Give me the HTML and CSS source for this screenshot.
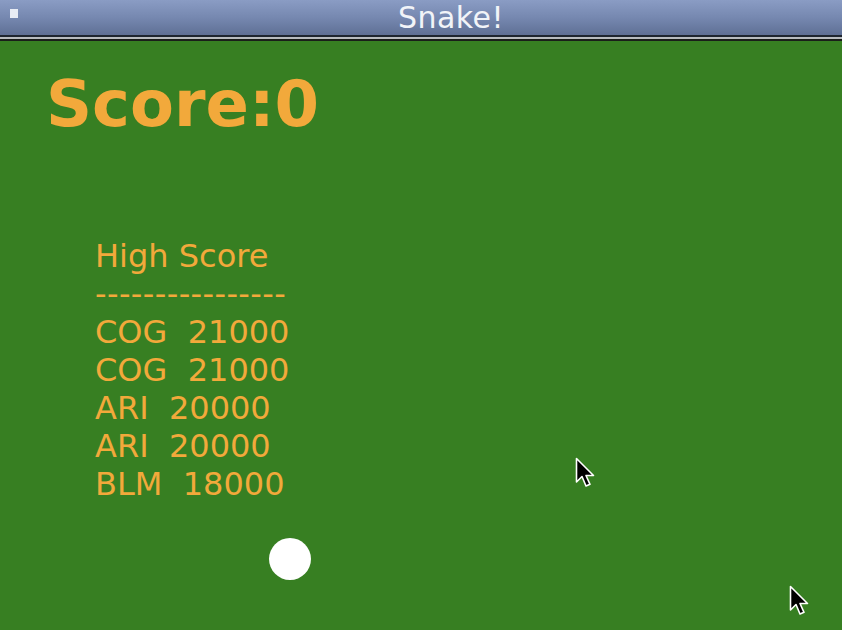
FILE: index.html
```html
<!DOCTYPE html>
<html>
<head>
<meta charset="utf-8">
<link rel="stylesheet" href="styles.css">
</head>
<body>
<div class="window">
  <div class="titlebar">
    <span class="close-box"></span>
    <span class="title">Snake!</span>
  </div>
  <div class="frame-edge"></div>
  <div class="game">
    <div class="score">Score:0</div>
    <div class="highscores">
      <div class="row">High Score</div>
      <div class="row dashes">----------------</div>
      <div class="row">COG  21000</div>
      <div class="row">COG  21000</div>
      <div class="row">ARI  20000</div>
      <div class="row">ARI  20000</div>
      <div class="row">BLM  18000</div>
    </div>
    <div class="ball"></div>
    <svg class="cursor cursor-a" width="22" height="34" viewBox="0 0 22 34">
      <path d="M1.5 1.5 L1.5 25 L7 19.5 L11 29 L15 27.3 L11 18.5 L18.5 18.5 Z" fill="#000" stroke="#fff" stroke-width="1.6" stroke-linejoin="round"/>
    </svg>
    <svg class="cursor cursor-b" width="22" height="34" viewBox="0 0 22 34">
      <path d="M1.5 1.5 L1.5 25 L7 19.5 L11 29 L15 27.3 L11 18.5 L18.5 18.5 Z" fill="#000" stroke="#fff" stroke-width="1.6" stroke-linejoin="round"/>
    </svg>
  </div>
</div>
</body>
</html>
```
FILE: styles.css
```css
html, body {
  margin: 0;
  padding: 0;
  width: 842px;
  height: 630px;
  overflow: hidden;
  background: #377f22;
}
.window {
  display: flex;
  flex-direction: column;
  width: 842px;
  height: 630px;
}
.titlebar {
  height: 35px;
  flex: none;
  background: linear-gradient(to bottom, #8a9cc4 0%, #7688b0 50%, #5f7095 100%);
  display: flex;
  align-items: center;
  justify-content: center;
  position: relative;
  padding-left: 60px;
  box-sizing: border-box;
}
.close-box {
  position: absolute;
  left: 10px;
  top: 9px;
  width: 8px;
  height: 9px;
  background: #e8ecf4;
}
.title {
  font-family: "DejaVu Sans", sans-serif;
  font-size: 30px;
  line-height: 35px;
  letter-spacing: 0.5px;
  color: #f2f4f8;
}
.frame-edge {
  flex: none;
  height: 6px;
  background: linear-gradient(to bottom, #1e2630 0px, #1e2630 2px, #b8bcc0 2px, #b8bcc0 4px, #1a1e1a 4px, #1a1e1a 6px);
}
.game {
  flex: 1;
  position: relative;
  background: #377f22;
  font-family: "DejaVu Sans", sans-serif;
  color: #f2a93b;
}
.score {
  font-weight: bold;
  font-size: 64px;
  line-height: 64px;
  margin: 31px 0 0 46px;
}
.highscores {
  margin: 101px 0 0 95px;
  font-size: 32px;
  line-height: 38px;
}
.row {
  white-space: pre;
}
.dashes {
  letter-spacing: 0.4px;
}
.ball {
  position: absolute;
  left: 269px;
  top: 497px;
  width: 42px;
  height: 42px;
  border-radius: 50%;
  background: #fff;
}
.cursor {
  position: absolute;
}
.cursor-a {
  left: 575px;
  top: 416px;
}
.cursor-b {
  left: 789px;
  top: 544px;
}
```
